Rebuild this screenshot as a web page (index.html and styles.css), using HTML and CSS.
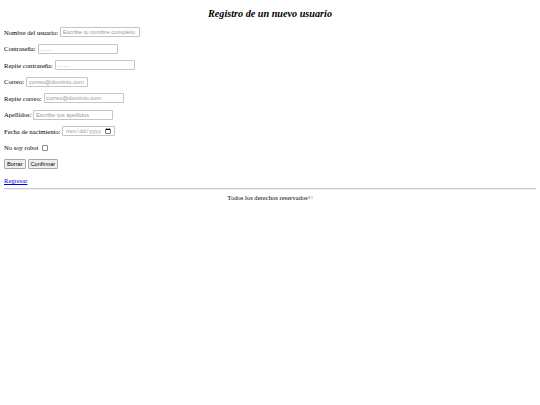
FILE: index.html
```html
<!DOCTYPE html>
<html lang="es">
<head>
    <meta charset="UTF-8">
    <meta name="viewport" content="width=device-width, initial-scale=1.0">
    <title>Registro</title>
    <link rel="stylesheet" href="styles.css">
</head>
<body>
    <h2 class="title">Registro de un nuevo usuario</h2>
    <form class="form">
        <div class="row">
            <label for="nombre">Nombre del usuario:</label>
            <input type="text" id="nombre" placeholder="Escribe tu nombre completo">
        </div>
        <div class="row">
            <label for="pass">Contraseña:</label>
            <input type="text" id="pass" placeholder="........">
        </div>
        <div class="row">
            <label for="pass2">Repite contraseña:</label>
            <input type="text" id="pass2" placeholder="........">
        </div>
        <div class="row">
            <label for="correo">Correo:</label>
            <input type="email" id="correo" class="short" placeholder="correo@dominio.com">
        </div>
        <div class="row">
            <label for="correo2">Repite correo:</label>
            <input type="email" id="correo2" placeholder="correo@dominio.com">
        </div>
        <div class="row">
            <label for="apellidos">Apellidos:</label>
            <input type="text" id="apellidos" placeholder="Escribe tus apellidos">
        </div>
        <div class="row">
            <label for="fecha">Fecha de nacimiento:</label>
            <input type="date" id="fecha" class="date">
        </div>
        <div class="row">
            <label for="robot">No soy robot</label>
            <input type="checkbox" id="robot" class="check">
        </div>
        <div class="row buttons">
            <button type="reset">Borrar</button>
            <button type="submit">Confirmar</button>
        </div>
        <div class="row">
            <a href="#">Regresar</a>
        </div>
    </form>
    <hr>
    <footer class="footer">Todos los derechos reservados©</footer>
</body>
</html>
```

FILE: styles.css
```css
body {
    margin: 4px;
    font-family: "Liberation Serif", "Times New Roman", serif;
    font-size: 6.6px;
    color: #000;
    background: #fff;
}

.title {
    margin: 4px 0 7px;
    text-align: center;
    font-size: 10.2px;
    line-height: 12px;
    font-weight: bold;
    font-style: italic;
}

.form {
    display: flex;
    flex-direction: column;
    gap: 6.5px;
}

.row {
    display: flex;
    align-items: center;
    height: 10px;
}

.row label {
    margin-right: 2px;
}

input {
    box-sizing: border-box;
    width: 80px;
    height: 10px;
    padding: 0 1.5px;
    border: 1px solid #c4c4c4;
    border-radius: 1px;
    font-family: "Liberation Sans", Arial, sans-serif;
    font-size: 5.8px;
    color: #000;
}

input::placeholder {
    color: #999;
}

input.short {
    width: 62px;
}

input.date {
    width: 53px;
    color: #999;
}

input.check {
    appearance: none;
    width: 6px;
    height: 6px;
    margin: 0 0 0 2px;
    padding: 0;
    border: 1px solid #888;
    border-radius: 1px;
    background: #fff;
}

.buttons {
    gap: 2px;
}

button {
    box-sizing: border-box;
    height: 10px;
    padding: 0 2px;
    border: 1px solid #aaa;
    border-radius: 1px;
    background: #efefef;
    font-family: "Liberation Sans", Arial, sans-serif;
    font-size: 5.6px;
    color: #000;
}

a {
    color: #0000ee;
}

hr {
    margin: 2px 0 3px;
    border: none;
    border-top: 1px solid #ccc;
    border-bottom: 1px solid #eee;
}

.footer {
    text-align: center;
    line-height: 10px;
}
```
